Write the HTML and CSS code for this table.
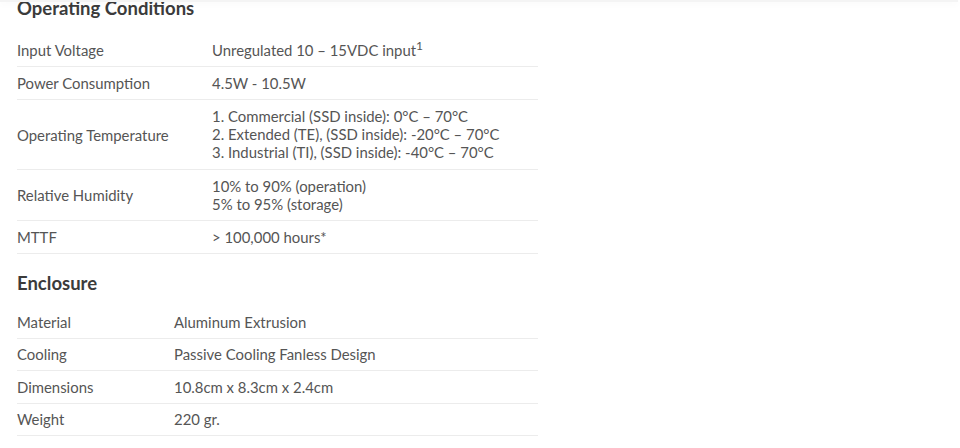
FILE: index.html
```html
<!DOCTYPE html>
<html>
<head>
<meta charset="utf-8">
<link rel="stylesheet" href="styles.css">
</head>
<body>
<div class="topbar"></div>
<main class="specs">
  <h2 class="section-title first">Operating Conditions</h2>
  <table class="spec-table wide">
    <tr><td class="label">Input Voltage</td><td class="value">Unregulated 10 – 15VDC input<sup>1</sup></td></tr>
    <tr><td class="label">Power Consumption</td><td class="value">4.5W - 10.5W</td></tr>
    <tr><td class="label">Operating Temperature</td><td class="value multi">1. Commercial (SSD inside): 0°C – 70°C<br>2. Extended (TE), (SSD inside): -20°C – 70°C<br>3. Industrial (TI), (SSD inside): -40°C – 70°C</td></tr>
    <tr><td class="label">Relative Humidity</td><td class="value">10% to 90% (operation)<br>5% to 95% (storage)</td></tr>
    <tr><td class="label">MTTF</td><td class="value">&gt; 100,000 hours*</td></tr>
  </table>
  <h2 class="section-title">Enclosure</h2>
  <table class="spec-table narrow">
    <tr><td class="label">Material</td><td class="value">Aluminum Extrusion</td></tr>
    <tr><td class="label">Cooling</td><td class="value">Passive Cooling Fanless Design</td></tr>
    <tr><td class="label">Dimensions</td><td class="value">10.8cm x 8.3cm x 2.4cm</td></tr>
    <tr><td class="label">Weight</td><td class="value">220 gr.</td></tr>
  </table>
</main>
</body>
</html>
```
FILE: styles.css
```css
html, body {
  margin: 0;
  padding: 0;
  background: #ffffff;
}
body {
  font-family: Lato, "Open Sans", sans-serif;
  color: #555555;
  overflow: hidden;
}
.topbar {
  position: fixed;
  top: 0;
  left: 0;
  width: 958px;
  height: 2px;
  background: #f4f4f4;
  box-shadow: 0 2px 6px rgba(0,0,0,0.05);
  z-index: 2;
}
.specs {
  padding-left: 17px;
}
.section-title {
  font-size: 18.5px;
  font-weight: 700;
  color: #3b3b3b;
  line-height: 22px;
  margin: 18px 0 12px;
}
.section-title.first {
  margin-top: -3px;
  margin-bottom: 15px;
}
.spec-table {
  width: 521px;
  border-collapse: collapse;
  font-size: 14.9px;
  line-height: 18px;
}
.spec-table td {
  padding: 7px 0;
  border-bottom: 1px solid #ececec;
  vertical-align: middle;
}
.spec-table td.multi {
  padding: 7px 0 8px;
}
.spec-table.narrow td {
  padding: 6.75px 0;
}
.spec-table.wide .label { width: 195px; }
.spec-table.narrow .label { width: 157px; }
.spec-table sup {
  font-size: 12px;
  line-height: 0;
  vertical-align: 6px;
}
```
